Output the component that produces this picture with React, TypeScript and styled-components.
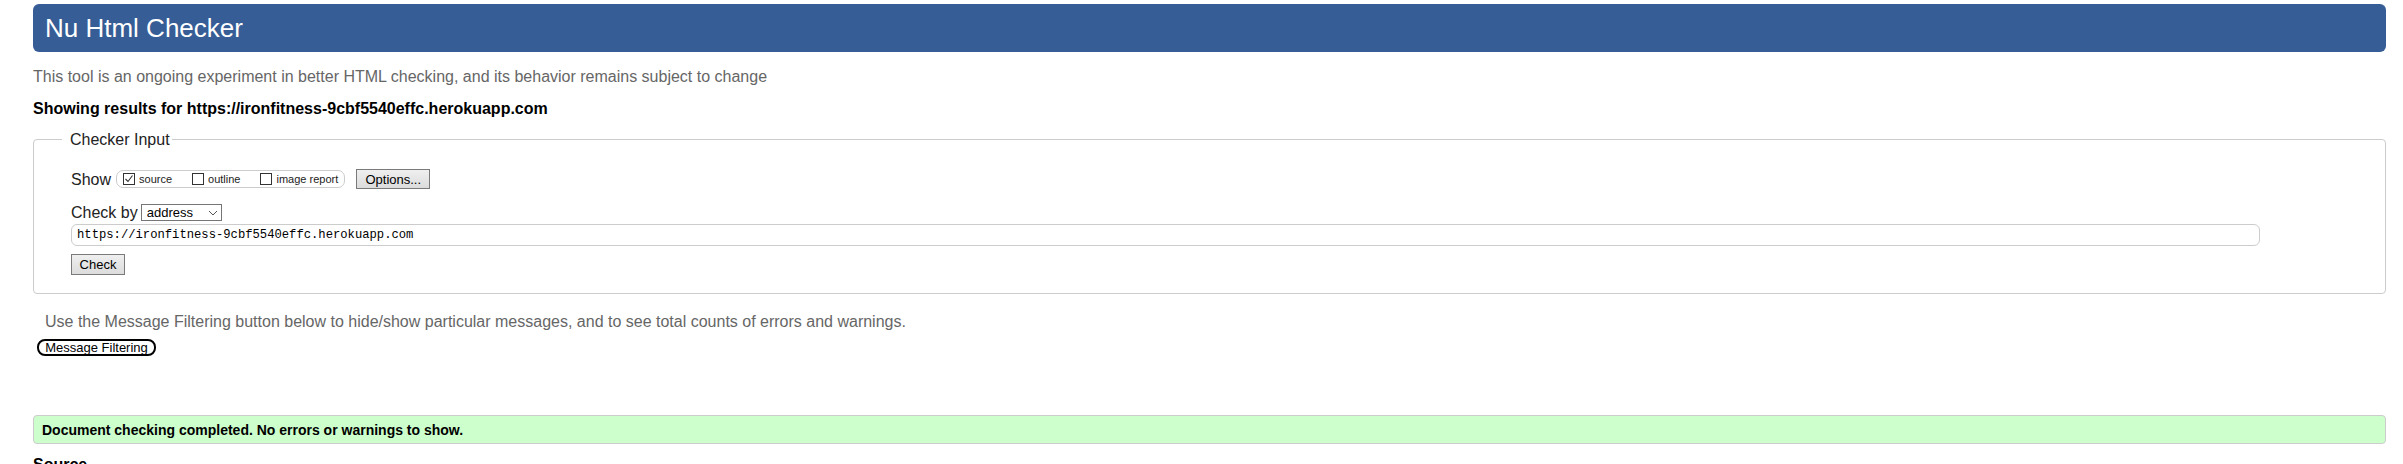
import React from "react";
import styled, { createGlobalStyle } from "styled-components";

const GlobalStyle = createGlobalStyle`
  html, body { margin: 0; padding: 0; background: #fff; }
  body { font-family: "Liberation Sans", Arial, sans-serif; color: #000; }
  * { box-sizing: border-box; }
`;

const Page = styled.div`
  padding: 4px 17px 0 33px;
`;

const Title = styled.h1`
  margin: 0;
  height: 48px;
  padding-left: 12px;
  display: flex;
  align-items: center;
  background: #365d95;
  color: #fff;
  border-radius: 6px;
  font-size: 26px;
  font-weight: normal;
  line-height: 1;
`;

const Intro = styled.p`
  margin: 15px 0 0;
  font-size: 16px;
  line-height: 19px;
  color: #666;
`;

const ResultsFor = styled.p`
  margin: 14px 0 0;
  font-size: 16px;
  line-height: 18px;
  font-weight: bold;
  color: #000;
`;

const Field = styled.fieldset`
  margin: 12px 0 0;
  padding: 20px 37px 18px;
  border: 1px solid #ccc;
  border-radius: 4px;
  min-width: 0;
`;

const Legend = styled.legend`
  margin-left: -9px;
  padding: 0 2px 0 8px;
  font-size: 16px;
  line-height: 19px;
  color: #222;
`;

const ShowRow = styled.div`
  display: flex;
  align-items: center;
  height: 20px;
`;

const CheckByRow = styled.div`
  display: flex;
  align-items: center;
  height: 17px;
  margin-top: 15px;
  gap: 3px;
`;

const RowLabel = styled.span`
  font-size: 16px;
  line-height: 17px;
  color: #222;
  white-space: nowrap;
`;

const ToggleGroup = styled.div`
  display: flex;
  align-items: center;
  flex: none;
  height: 18px;
  margin-left: 5px;
  padding: 0 6px;
  border: 1px solid #ccc;
  border-radius: 7px;
  white-space: nowrap;
`;

const Toggle = styled.label<{ $first?: boolean }>`
  display: flex;
  align-items: center;
  gap: 4px;
  margin-left: ${(p) => (p.$first ? 0 : 20)}px;
  font-size: 11px;
  line-height: 12px;
  color: #222;
  white-space: nowrap;
`;

const GrayButton = styled.button<{ $w: number; $h: number }>`
  display: block;
  flex: none;
  width: ${(p) => p.$w}px;
  height: ${(p) => p.$h}px;
  padding: 0;
  border: 1px solid #7a7a7a;
  border-radius: 0;
  background: linear-gradient(#efefef, #dcdcdc);
  font-family: "Liberation Sans", Arial, sans-serif;
  font-size: 13px;
  color: #000;
`;

const OptionsButton = styled(GrayButton)`
  margin-left: 11px;
`;

const CheckButton = styled(GrayButton)`
  margin-top: 8px;
`;

const SelectBox = styled.div`
  display: flex;
  align-items: center;
  justify-content: space-between;
  width: 81px;
  height: 17px;
  padding: 0 3px 0 5px;
  border: 1px solid #767676;
  background: #fff;
  font-size: 13px;
  color: #000;
`;

const UrlInput = styled.input`
  display: block;
  width: calc(100% - 88px);
  height: 22px;
  margin-top: 3px;
  padding: 0 5px;
  border: 1px solid #ccc;
  border-radius: 6px;
  font-family: "Liberation Mono", "DejaVu Sans Mono", monospace;
  font-size: 12.2px;
  color: #000;
  outline: none;
`;

const FilterNote = styled.p`
  margin: 18px 0 0;
  padding-left: 12px;
  font-size: 16px;
  line-height: 19px;
  color: #666;
`;

const FilterButton = styled.button`
  display: block;
  width: 119px;
  height: 17px;
  margin: 8px 0 0 4px;
  padding: 0;
  border: 2px solid #000;
  border-radius: 8px;
  background: #fff;
  font-family: "Liberation Sans", Arial, sans-serif;
  font-size: 13px;
  line-height: 13px;
  color: #000;
`;

const Success = styled.div`
  display: flex;
  align-items: center;
  height: 29px;
  margin-top: 59px;
  padding-left: 8px;
  border: 1px solid #ccc;
  border-radius: 4px;
  background: #ccffcc;
  font-size: 14px;
  font-weight: bold;
`;

const SourceHeading = styled.h2`
  margin: 11px 0 0;
  font-size: 16px;
  line-height: 19px;
  font-weight: bold;
`;

function Box({ checked }: { checked?: boolean }) {
  return (
    <svg width="12" height="12" viewBox="0 0 12 12">
      <rect x="0.5" y="0.5" width="11" height="11" fill="#fff" stroke="#333" />
      {checked && <polyline points="2.5,6 5,8.5 9.5,2.5" fill="none" stroke="#333" strokeWidth="1.1" />}
    </svg>
  );
}

function Chevron() {
  return (
    <svg width="10" height="6" viewBox="0 0 10 6">
      <polyline points="1,1 5,5 9,1" fill="none" stroke="#555" strokeWidth="1" />
    </svg>
  );
}

export default function App() {
  return (
    <>
      <GlobalStyle />
      <Page>
        <Title>Nu Html Checker</Title>
        <Intro>This tool is an ongoing experiment in better HTML checking, and its behavior remains subject to change</Intro>
        <ResultsFor>Showing results for https://ironfitness-9cbf5540effc.herokuapp.com</ResultsFor>
        <Field>
          <Legend>Checker Input</Legend>
          <ShowRow>
            <RowLabel>Show</RowLabel>
            <ToggleGroup>
              <Toggle $first>
                <Box checked />
                source
              </Toggle>
              <Toggle>
                <Box />
                outline
              </Toggle>
              <Toggle>
                <Box />
                image report
              </Toggle>
            </ToggleGroup>
            <OptionsButton $w={74} $h={20}>Options...</OptionsButton>
          </ShowRow>
          <CheckByRow>
            <RowLabel>Check by</RowLabel>
            <SelectBox>
              address
              <Chevron />
            </SelectBox>
          </CheckByRow>
          <UrlInput readOnly defaultValue="https://ironfitness-9cbf5540effc.herokuapp.com" />
          <CheckButton $w={54} $h={21}>Check</CheckButton>
        </Field>
        <FilterNote>
          Use the Message Filtering button below to hide/show particular messages, and to see total counts of errors and warnings.
        </FilterNote>
        <FilterButton>Message Filtering</FilterButton>
        <Success>Document checking completed. No errors or warnings to show.</Success>
        <SourceHeading>Source</SourceHeading>
      </Page>
    </>
  );
}
